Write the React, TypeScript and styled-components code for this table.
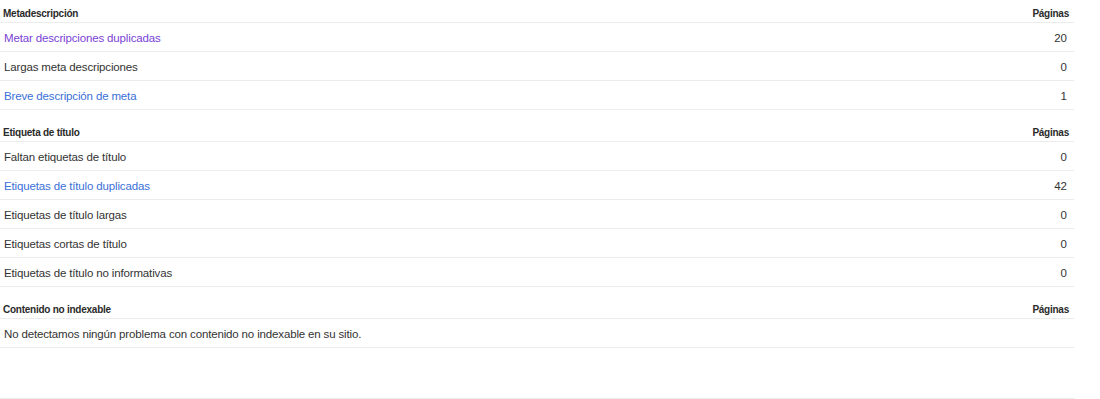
import styled, { createGlobalStyle } from "styled-components";

type Tone = "visited" | "link" | "plain";
type Item = { label: string; count: number; tone?: Tone };

const sections: { title: string; items: Item[]; empty?: string }[] = [
  {
    title: "Metadescripción",
    items: [
      { label: "Metar descripciones duplicadas", count: 20, tone: "visited" },
      { label: "Largas meta descripciones", count: 0 },
      { label: "Breve descripción de meta", count: 1, tone: "link" },
    ],
  },
  {
    title: "Etiqueta de título",
    items: [
      { label: "Faltan etiquetas de título", count: 0 },
      { label: "Etiquetas de título duplicadas", count: 42, tone: "link" },
      { label: "Etiquetas de título largas", count: 0 },
      { label: "Etiquetas cortas de título", count: 0 },
      { label: "Etiquetas de título no informativas", count: 0 },
    ],
  },
  {
    title: "Contenido no indexable",
    items: [],
    empty: "No detectamos ningún problema con contenido no indexable en su sitio.",
  },
];

function App() {
  return (
    <>
      <GlobalStyle />
      <Page>
        {sections.map((s) => (
          <Section key={s.title}>
            <HeadRow>
              <HeadCell>{s.title}</HeadCell>
              <HeadCell>Páginas</HeadCell>
            </HeadRow>
            {s.items.map((it) => (
              <Row key={it.label}>
                <Label $tone={it.tone ?? "plain"}>{it.label}</Label>
                <Count>{it.count}</Count>
              </Row>
            ))}
            {s.empty && (
              <Row>
                <Label $tone="plain">{s.empty}</Label>
              </Row>
            )}
          </Section>
        ))}
        <Footer />
      </Page>
    </>
  );
}

const GlobalStyle = createGlobalStyle`
  body {
    margin: 0;
    background: #ffffff;
    font-family: "Liberation Sans", Arial, sans-serif;
  }
`;

const Page = styled.div`
  width: 1074px;
`;

const Section = styled.div`
  & + & {
    margin-top: 9px;
  }
`;

const HeadRow = styled.div`
  display: flex;
  justify-content: space-between;
  height: 23px;
  box-sizing: border-box;
  padding: 0 5px 0 3px;
  border-bottom: 1px solid #ececec;
`;

const HeadCell = styled.div`
  padding-top: 7px;
  font-size: 10px;
  line-height: 13px;
  font-weight: bold;
  letter-spacing: -0.25px;
  color: #2a2a2a;
`;

const Row = styled.div`
  display: flex;
  align-items: center;
  justify-content: space-between;
  box-sizing: border-box;
  height: 29px;
  padding: 2px 7px 0 4px;
  border-bottom: 1px solid #ececec;
`;

const toneColor: Record<Tone, string> = {
  visited: "#7b3fd6",
  link: "#3a6fd8",
  plain: "#333333",
};

const Label = styled.span<{ $tone: Tone }>`
  font-size: 11.5px;
  letter-spacing: -0.15px;
  color: ${(p) => toneColor[p.$tone]};
`;

const Count = styled.span`
  font-size: 11.5px;
  color: #333333;
`;

const Footer = styled.div`
  margin-top: 50px;
  border-top: 1px solid #ececec;
`;

export default App;
